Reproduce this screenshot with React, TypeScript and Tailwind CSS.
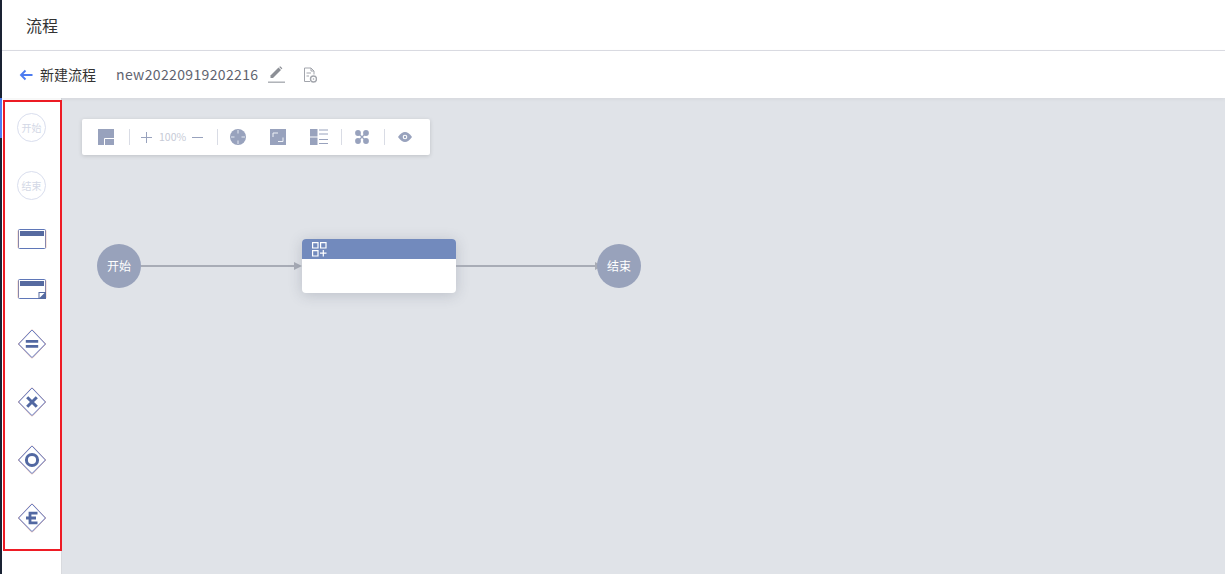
const font = "font-['Microsoft_YaHei','Noto_Sans_CJK_SC','Noto_Sans',sans-serif]";

function Circle({ label }: { label: string }) {
  return (
    <div className="flex h-[29px] w-[29px] items-center justify-center rounded-full border border-[#d9deee] text-[10px] text-[#d3d8e6]">
      {label}
    </div>
  );
}

function Task({ marker }: { marker?: boolean }) {
  return (
    <svg width="30" height="22" viewBox="0 0 30 22" className="block">
      <rect x="1.5" y="1.5" width="27" height="19" rx="1" fill="#fff" stroke="#5f77b8" />
      <path d="M1 2.5V20" stroke="#e8ac90" strokeWidth="0.6" />
      <path d="M29 2.5V20" stroke="#e8ac90" strokeWidth="0.6" />
      <rect x="3" y="3" width="24" height="5" fill="#566aa0" />
      {marker && (
        <g>
          <rect x="21.5" y="14" width="7.5" height="7" fill="#566aa0" />
          <path d="M22.5 20L27.5 15H22.5Z" fill="#fff" />
        </g>
      )}
    </svg>
  );
}

function Diamond({ kind }: { kind: "eq" | "x" | "o" | "e" }) {
  return (
    <svg width="30" height="30" viewBox="0 0 30 30" className="block">
      <path d="M15.6 1.2L28.8 15L15.6 28.8Q15 29.2 14.4 28.8L1.2 15L14.4 1.2Q15 .8 15.6 1.2Z" fill="#fff" stroke="#e2ab9f" strokeWidth="1" />
      <path d="M15.2 1.2L28.4 15L15.2 28.4Q15 28.6 14.8 28.4L1.6 15L14.8 1.2Q15 1 15.2 1.2Z" fill="#fff" stroke="#5f77c0" strokeWidth="1" />
      {kind === "eq" && <path d="M8.8 12.4H21.2M8.8 17.4H21.2" stroke="#5268a2" strokeWidth="2.6" />}
      {kind === "x" && <path d="M10.2 10.2L19.8 19.8M19.8 10.2L10.2 19.8" stroke="#5268a2" strokeWidth="3" />}
      {kind === "o" && <circle cx="15" cy="15" r="5.6" fill="none" stroke="#5268a2" strokeWidth="3" />}
      {kind === "e" && <path d="M20.5 10.2H13V19.8H20.5M9 15H19" fill="none" stroke="#5268a2" strokeWidth="2.8" />}
    </svg>
  );
}

function Divider() {
  return <div className="h-[16px] w-px bg-[#d9dce5]" />;
}

function Toolbar() {
  const c = "#98a2bd";
  return (
    <div className="absolute left-[20px] top-[21px] flex h-[36px] w-[348px] items-center rounded-[2px] bg-white pl-[16px] shadow-[0_1px_4px_rgba(0,0,0,0.15)]">
      <svg width="16" height="16" viewBox="0 0 16 16" className="block">
        <rect width="16" height="16" fill={c} />
        <path d="M6.5 16V9.5H16" fill="none" stroke="#fff" strokeWidth="1" />
      </svg>
      <div className="ml-[15px] mr-[11px]"><Divider /></div>
      <svg width="11" height="11" viewBox="0 0 11 11" className="block">
        <path d="M5.5 0V11M0 5.5H11" stroke={c} strokeWidth="1" />
      </svg>
      <span className="ml-[7px] w-[27px] whitespace-nowrap text-[10.5px] text-[#c6cad6]">100%</span>
      <svg width="11" height="11" viewBox="0 0 11 11" className="ml-[6px] block">
        <path d="M0 5.5H11" stroke={c} strokeWidth="1" />
      </svg>
      <div className="ml-[14px] mr-[12px]"><Divider /></div>
      <svg width="16" height="16" viewBox="0 0 16 16" className="block">
        <circle cx="8" cy="8" r="8" fill={c} />
        <path d="M8 1V4.5M8 11.5V15M1 8H4.5M11.5 8H15" stroke="#e4e9f3" strokeWidth="1" />
      </svg>
      <svg width="16" height="16" viewBox="0 0 16 16" className="ml-[24px] block">
        <rect width="16" height="16" fill={c} />
        <path d="M3 8V4H8M8 12.5H13V8.5" fill="none" stroke="#eef1f7" strokeWidth="1" />
      </svg>
      <svg width="18" height="16" viewBox="0 0 18 16" className="ml-[24px] block">
        <rect width="7.5" height="7.5" y="0" fill={c} />
        <rect width="7.5" height="7.5" y="8.5" fill={c} />
        <path d="M9 1H18M9 5H18M9 10.5H18M9 14.5H18" stroke={c} strokeWidth="1" />
      </svg>
      <div className="ml-[13px] mr-[13px]"><Divider /></div>
      <svg width="14" height="14" viewBox="0 0 14 14" className="block">
        <path d="M3 3L11 11M11 3L3 11" stroke={c} strokeWidth="1.2" />
        <circle cx="3" cy="3" r="2.9" fill={c} />
        <circle cx="11" cy="3" r="2.9" fill={c} />
        <circle cx="3" cy="11" r="2.9" fill={c} />
        <circle cx="11" cy="11" r="2.9" fill={c} />
      </svg>
      <div className="ml-[15px] mr-[13px]"><Divider /></div>
      <svg width="14" height="10" viewBox="0 0 14 10" className="block">
        <path d="M0 5Q3.5 0 7 0T14 5Q10.5 10 7 10T0 5Z" fill={c} />
        <circle cx="7" cy="5" r="2.3" fill="#fff" />
        <circle cx="7" cy="5" r="1.2" fill={c} />
      </svg>
    </div>
  );
}

function Flow() {
  return (
    <>
      <svg width="162" height="10" viewBox="0 0 162 10" className="absolute left-[79px] top-[163px] block">
        <path d="M0 5H155" stroke="#a8acb6" strokeWidth="2" />
        <path d="M153 1L161 5L153 9Z" fill="#a8acb6" />
      </svg>
      <div className="absolute left-[35px] top-[146px] flex h-[44px] w-[44px] items-center justify-center rounded-full bg-[#98a2bb] text-[12px] text-white">开始</div>
      <div className="absolute left-[240px] top-[141px] h-[54px] w-[154px] overflow-hidden rounded-[4px] bg-white shadow-[0_2px_14px_rgba(60,70,90,0.22)]">
        <div className="flex h-[20px] items-center bg-[#728abd] pl-[10px]">
          <svg width="15" height="15" viewBox="0 0 15 15" className="block">
            <path d="M.6.6H6V6H.6ZM8.6 .6H14V6H8.6ZM.6 8.6H6V14H.6ZM11.3 8V14.5M8 11.2H14.5" fill="none" stroke="#fff" strokeWidth="1.2" />
          </svg>
        </div>
      </div>
      <svg width="148" height="10" viewBox="0 0 148 10" className="absolute left-[394px] top-[163px] block">
        <path d="M0 5H141" stroke="#a8acb6" strokeWidth="2" />
        <path d="M139 1L147 5L139 9Z" fill="#a8acb6" />
      </svg>
      <div className="absolute left-[535px] top-[146px] flex h-[44px] w-[44px] items-center justify-center rounded-full bg-[#98a2bb] text-[12px] text-white">结束</div>
    </>
  );
}

export default function App() {
  return (
    <div className={`flex h-[574px] w-[1225px] overflow-hidden bg-white ${font}`}>
      <div className="flex w-[2px] shrink-0 flex-col bg-[#1a2233]">
        <div className="h-[98px]" />
        <div className="h-[40px] bg-[#4d7cf0]" />
      </div>
      <div className="flex min-w-0 flex-1 flex-col">
        <div className="flex h-[51px] shrink-0 items-center border-b border-[#dcdde4] pl-[24px] pb-[1px] text-[16px] text-[#333]">流程</div>
        <div className="z-10 flex h-[47px] shrink-0 items-center bg-white pl-[17px] shadow-[0_1px_4px_rgba(0,0,0,0.06)]">
          <svg width="14" height="12" viewBox="0 0 14 12" className="block">
            <path d="M13.5 6H2M6.5 1.5L2 6L6.5 10.5" fill="none" stroke="#4d7cf0" strokeWidth="1.9" />
          </svg>
          <span className="ml-[7px] text-[14px] text-[#333]">新建流程</span>
          <span className="ml-[20px] text-[14px] tracking-[0.36px] text-[#5f6470]">new20220919202216</span>
          <svg width="17" height="18" viewBox="0 0 17 18" className="ml-[9px] block">
            <path d="M2.5 12V9.5L10.5 1.5L13 4L5 12Z" fill="#8c8f96" />
            <path d="M11.2 1L12.2.2L14.3 2.3L13.6 3.2Z" fill="#8c8f96" />
            <path d="M0 16.2H17" stroke="#a9acb2" strokeWidth="1.4" />
          </svg>
          <svg width="14" height="16" viewBox="0 0 14 16" className="ml-[18px] block">
            <path d="M7 14.5H1.5V1H8L11 4V7.5M8 1V4H11M3.5 6H8M3.5 9H6" fill="none" stroke="#a2a5ac" strokeWidth="1" />
            <circle cx="10.5" cy="12" r="3" fill="none" stroke="#a2a5ac" strokeWidth="1.4" />
            <circle cx="10.5" cy="12" r="0.8" fill="#a2a5ac" />
          </svg>
        </div>
        <div className="flex min-h-0 flex-1">
          <div className="w-[60px] shrink-0 border-r border-[#d8dade] bg-white pl-[1px] pt-[2px]">
            <div className="flex h-[451px] w-[59px] flex-col items-center border-2 border-[#ee1c25] pr-[2px] pt-[11px]">
              <Circle label="开始" />
              <div className="mt-[29px]"><Circle label="结束" /></div>
              <div className="mt-[28px]"><Task /></div>
              <div className="mt-[28px]"><Task marker /></div>
              <div className="mt-[29px]"><Diamond kind="eq" /></div>
              <div className="mt-[28px]"><Diamond kind="x" /></div>
              <div className="mt-[28px]"><Diamond kind="o" /></div>
              <div className="mt-[28px]"><Diamond kind="e" /></div>
            </div>
          </div>
          <div className="relative min-w-0 flex-1 bg-[#e0e3e8]">
            <Toolbar />
            <Flow />
          </div>
        </div>
      </div>
    </div>
  );
}
